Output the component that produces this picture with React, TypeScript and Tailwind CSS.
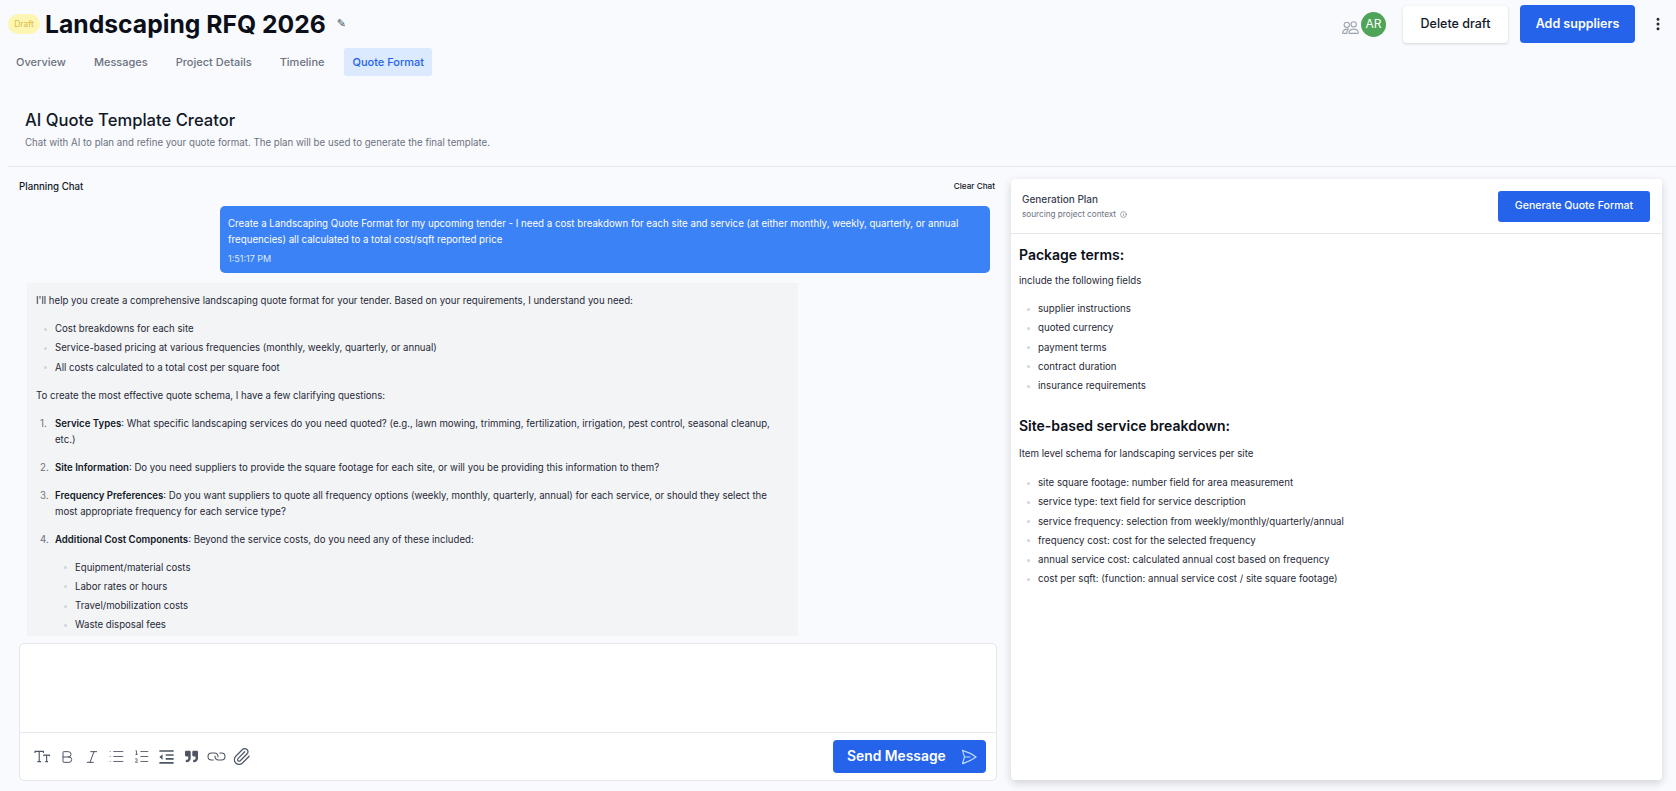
import { ReactNode } from "react";
import { Info, Paperclip, Link, Italic, Bold, List, ListOrdered, EllipsisVertical } from "lucide-react";
import { BsPeople } from "react-icons/bs";
import { FaQuoteRight } from "react-icons/fa";
import { RiIndentDecrease } from "react-icons/ri";
import { HiOutlinePaperAirplane } from "react-icons/hi2";

const tabs = ["Overview", "Messages", "Project Details", "Timeline", "Quote Format"];

function Bullets({ items, className }: { items: string[]; className?: string }) {
  return (
    <ul className={className}>
      {items.map((item, i) => (
        <li key={item} className={i > 0 ? "mt-[3.25px] flex items-center gap-[8px]" : "flex items-center gap-[8px]"}>
          <span className="h-[3px] w-[3px] shrink-0 rounded-full bg-[#d1d5db]" />
          {item}
        </li>
      ))}
    </ul>
  );
}

function Numbered({ n, title, children }: { n: number; title: string; children: ReactNode }) {
  return (
    <li className="mt-[12px] flex pl-[4px]">
      <span className="w-[15px] shrink-0 text-[#6b7280]">{n}.</span>
      <div className="min-w-0 flex-1">
        <b className="font-semibold text-[#111827]">{title}</b>
        {children}
      </div>
    </li>
  );
}

function Toolbar() {
  const cell = "flex w-[25px] items-center justify-center";
  return (
    <div className="flex items-center text-[#4b5563]">
      <span className={cell}>
        <svg width="16" height="13" viewBox="0 0 17 14" fill="none" stroke="currentColor" strokeWidth="1.2">
          <path d="M1 3.2V1.5h9v1.7M5.5 1.5v11M3.5 12.5h4" />
          <path d="M10.5 6.8V5.5h6v1.3M13.5 5.5v7M12 12.5h3" />
        </svg>
      </span>
      <span className={cell}><Bold size={16} strokeWidth={1.5} /></span>
      <span className={cell}><Italic size={16} strokeWidth={1.5} /></span>
      <span className={cell}><List size={17} strokeWidth={1.25} /></span>
      <span className={cell}><ListOrdered size={17} strokeWidth={1.25} /></span>
      <span className={cell}><RiIndentDecrease size={19} /></span>
      <span className={cell}><FaQuoteRight size={13} /></span>
      <span className={cell}><Link size={17} strokeWidth={1.5} className="rotate-45" /></span>
      <span className={cell}><Paperclip size={19} strokeWidth={1.5} /></span>
    </div>
  );
}

export default function App() {
  return (
    <div className="h-[791px] w-[1676px] overflow-hidden bg-[#f9fafd] font-['Inter',sans-serif] text-[#111827]">
      {/* HEADER */}
      <header className="flex h-[48px] items-center pl-[8px] pr-[10px]">
        <span className="flex h-[20px] w-[32px] items-center justify-center rounded-full bg-[#fdf6b2] text-[8.5px] text-[#d9bb4a]">Draft</span>
        <h1 className="ml-[5px] text-[24.7px] font-bold leading-none text-[#0b0f19]">Landscaping RFQ 2026</h1>
        <span className="ml-[11px] font-['DejaVu_Sans',sans-serif] text-[11px] text-[#4b5563]">✎</span>
        <div className="ml-auto flex items-center">
          <BsPeople size={17} className="mt-[7px] text-[#9ca3af]" />
          <span className="ml-[2px] flex h-[25px] w-[25px] items-center justify-center rounded-full bg-[#4fa458] text-[12px] text-white">AR</span>
          <button className="ml-[17px] h-[37px] w-[105px] rounded-[4px] bg-white text-[12.5px] font-medium shadow-[0_1px_3px_rgba(0,0,0,0.15)]">Delete draft</button>
          <button className="ml-[12px] h-[38px] w-[115px] rounded-[4px] bg-[#2563eb] text-[12.5px] font-semibold text-white">Add suppliers</button>
          <EllipsisVertical size={16} strokeWidth={2.5} className="ml-[15px] text-[#1f2937]" />
        </div>
      </header>

      {/* TABS */}
      <nav className="flex h-[28px] items-center pl-[8px] text-[11px] font-medium text-[#6b7280]">
        {tabs.map((t) => (
          <span key={t} className={t === "Quote Format" ? "flex h-[28px] items-center rounded-[3px] bg-[#dbeafe] px-[8px] text-[#2563eb]" : "mr-[12px] flex h-[28px] items-center px-[8px]"}>
            {t}
          </span>
        ))}
      </nav>

      <div className="pl-[25px] pt-[32px]">
        <h2 className="text-[16.6px] font-medium leading-[24px]">AI Quote Template Creator</h2>
        <p className="mt-[4px] text-[9.7px] leading-[14px] text-[#6b7280]">Chat with AI to plan and refine your quote format. The plan will be used to generate the final template.</p>
      </div>
      <div className="ml-[8px] mt-[16px] border-t border-[#e5e7eb]" />

      <div className="flex h-[623px] pl-[19px] pr-[12px]">
        {/* CHAT */}
        <div className="flex w-[978px] flex-col">
          <div className="flex h-[39px] items-center justify-between pr-[2px]">
            <span className="mt-[2px] text-[9.7px] font-medium">Planning Chat</span>
            <span className="text-[8.2px] font-medium">Clear Chat</span>
          </div>
          <div className="flex h-[67px] justify-end pr-[7px]">
            <div className="w-[770px] rounded-[5px] bg-[#3b82f6] px-[8px] pt-[10px] text-[9.7px] leading-[16px] text-white">
              <p>Create a Landscaping Quote Format for my upcoming tender - I need a cost breakdown for each site and service (at either monthly, weekly, quarterly, or annual frequencies) all calculated to a total cost/sqft reported price</p>
              <p className="mt-[3px] text-[9px] text-[#dbeafe]">1:51:17 PM</p>
            </div>
          </div>
          <div className="ml-[8px] mt-[10px] h-[353px] w-[771px] overflow-hidden bg-[#f3f4f6] px-[9px] pt-[10px] text-[9.65px] leading-[16px] text-[#1f2937]">
            <p>I'll help you create a comprehensive landscaping quote format for your tender. Based on your requirements, I understand you need:</p>
            <Bullets
              className="mt-[12px] pl-[8px]"
              items={[
                "Cost breakdowns for each site",
                "Service-based pricing at various frequencies (monthly, weekly, quarterly, or annual)",
                "All costs calculated to a total cost per square foot",
              ]}
            />
            <p className="mt-[12px]">To create the most effective quote schema, I have a few clarifying questions:</p>
            <ol>
              <Numbered n={1} title="Service Types">: What specific landscaping services do you need quoted? (e.g., lawn mowing, trimming, fertilization, irrigation, pest control, seasonal cleanup, etc.)</Numbered>
              <Numbered n={2} title="Site Information">: Do you need suppliers to provide the square footage for each site, or will you be providing this information to them?</Numbered>
              <Numbered n={3} title="Frequency Preferences">: Do you want suppliers to quote all frequency options (weekly, monthly, quarterly, annual) for each service, or should they select the most appropriate frequency for each service type?</Numbered>
              <Numbered n={4} title="Additional Cost Components">
                : Beyond the service costs, do you need any of these included:
                <Bullets
                  className="mt-[12px] pl-[9px]"
                  items={["Equipment/material costs", "Labor rates or hours", "Travel/mobilization costs", "Waste disposal fees"]}
                />
              </Numbered>
            </ol>
          </div>
          <div className="mt-[7px] flex h-[138px] flex-col rounded-[5px] border border-[#e5e7eb] bg-white">
            <div className="h-[89px] border-b border-[#e5e7eb]" />
            <div className="flex flex-1 items-center justify-between pl-[9px] pr-[10px]">
              <Toolbar />
              <button className="flex h-[33px] w-[153px] items-center gap-[14px] rounded-[4px] bg-[#2563eb] pl-[14px] text-[13.85px] font-semibold text-white">
                Send Message
                <HiOutlinePaperAirplane size={18} className="text-[#bfdbfe]" />
              </button>
            </div>
          </div>
        </div>

        {/* PLAN */}
        <div className="ml-[14px] mt-[12px] flex h-[601px] w-[651px] flex-col rounded-[4px] bg-white shadow-[0_3px_9px_rgba(0,0,0,0.16)]">
          <div className="flex h-[55px] items-center justify-between border-b border-[#e5e7eb] pl-[11px] pr-[12px]">
            <div>
              <p className="text-[10px] font-medium leading-[14px] text-[#374151]">Generation Plan</p>
              <p className="mt-[2px] flex items-center gap-[4px] text-[8.2px] leading-[12px] text-[#6b7280]">sourcing project context <Info size={7} /></p>
            </div>
            <button className="h-[31px] w-[152px] rounded-[3px] bg-[#2563eb] text-[10.6px] font-medium text-white">Generate Quote Format</button>
          </div>
          <div className="pl-[8px] pt-[10px] text-[9.7px] leading-[16px] text-[#1f2937]">
            <h3 className="text-[14px] font-semibold leading-[22px] text-[#0b0f19]">Package terms:</h3>
            <p className="mt-[7px]">include the following fields</p>
            <Bullets
              className="mt-[12px] pl-[8px]"
              items={["supplier instructions", "quoted currency", "payment terms", "contract duration", "insurance requirements"]}
            />
            <h3 className="mt-[21px] text-[14px] font-semibold leading-[22px] text-[#0b0f19]">Site-based service breakdown:</h3>
            <p className="mt-[9px]">Item level schema for landscaping services per site</p>
            <Bullets
              className="mt-[13px] pl-[8px]"
              items={[
                "site square footage: number field for area measurement",
                "service type: text field for service description",
                "service frequency: selection from weekly/monthly/quarterly/annual",
                "frequency cost: cost for the selected frequency",
                "annual service cost: calculated annual cost based on frequency",
                "cost per sqft: (function: annual service cost / site square footage)",
              ]}
            />
          </div>
        </div>
      </div>
    </div>
  );
}
